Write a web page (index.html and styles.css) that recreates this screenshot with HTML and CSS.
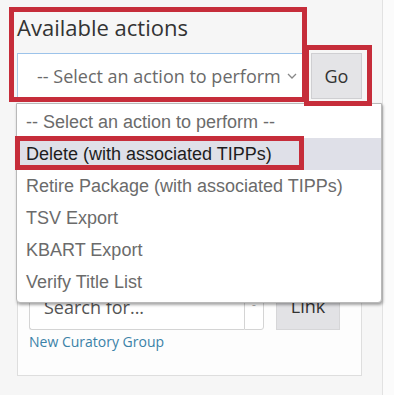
FILE: index.html
```html
<!DOCTYPE html>
<html>
<head>
<meta charset="utf-8">
<link rel="stylesheet" href="styles.css">
</head>
<body>
<div class="page">
  <h3 class="title">Available actions</h3>
  <div class="action-row">
    <div class="select">
      <span class="select-text">-- Select an action to perform --</span>
      <svg class="chevron" width="10" height="7" viewBox="0 0 10 7"><path d="M1 1 L5 5 L9 1" fill="none" stroke="#888" stroke-width="1.3"/></svg>
    </div>
    <button class="btn go">Go</button>
  </div>
  <div class="panel">
    <div class="search-row">
      <div class="search-group">
        <div class="search-input">Search for...</div>
        <div class="search-addon">-</div>
      </div>
      <button class="btn link-btn">Link</button>
    </div>
    <a class="new-link" href="#">New Curatory Group</a>
  </div>

  <ul class="dropdown">
    <li class="opt">-- Select an action to perform --</li>
    <li class="opt active">Delete (with associated TIPPs)</li>
    <li class="opt">Retire Package (with associated TIPPs)</li>
    <li class="opt">TSV Export</li>
    <li class="opt">KBART Export</li>
    <li class="opt">Verify Title List</li>
  </ul>

  <div class="mark mark-title"></div>
  <div class="mark mark-go"></div>
  <div class="mark mark-delete"></div>
</div>
</body>
</html>
```

FILE: styles.css
```css
html, body {
  margin: 0;
  padding: 0;
  background: #fbfbfb;
}
body {
  width: 394px;
  height: 395px;
  overflow: hidden;
  font-family: "Open Sans", sans-serif;
}
.page {
  position: relative;
  width: 383px;
  height: 395px;
  padding: 12px 0 0 17px;
  box-sizing: border-box;
  border-right: 1px solid #e2e2e2;
  background: #f6f6f6;
}
.title {
  margin: 0;
  font-weight: 400;
  font-size: 22px;
  line-height: 30px;
  color: #333;
}
.action-row {
  display: flex;
  gap: 6px;
  margin-top: 11px;
  width: 345px;
}
.select {
  width: 288px;
  height: 46px;
  box-sizing: border-box;
  border: 1px solid #a9c8e6;
  border-top-color: #9cc3ea;
  background: #fff;
  display: flex;
  align-items: center;
  padding: 0 7px 0 19px;
  overflow: hidden;
}
.select-text {
  flex: 1;
  white-space: nowrap;
  overflow: hidden;
  font-size: 18px;
  color: #6a6a6a;
}
.chevron {
  flex: none;
  margin-left: 4px;
}
.btn {
  font-family: "Open Sans", sans-serif;
  font-size: 18px;
  color: #333;
  background: #e4e4e7;
  border: 1px solid #cfcfd2;
  padding: 0;
}
.go {
  width: 51px;
  height: 46px;
}
.panel {
  margin-top: 4px;
  width: 345px;
  height: 273px;
  box-sizing: border-box;
  border: 1px solid #dedede;
  border-top: none;
  background: #fdfdfd;
  padding: 187px 0 0 11px;
}
.search-row {
  display: flex;
  align-items: flex-end;
  gap: 12px;
}
.search-group {
  display: flex;
  height: 38px;
}
.search-input {
  width: 215px;
  box-sizing: border-box;
  border: 1px solid #d4d4d4;
  border-right: none;
  border-radius: 3px 0 0 3px;
  background: #fff;
  padding: 1px 14px 9px;
  font-size: 18px;
  color: #555;
  line-height: 26px;
}
.search-addon {
  width: 20px;
  box-sizing: border-box;
  border: 1px solid #d4d4d4;
  border-radius: 0 3px 3px 0;
  background: #fff;
  font-size: 12px;
  color: #aaa;
  text-align: center;
  line-height: 24px;
}
.link-btn {
  width: 64px;
  height: 40px;
  padding-bottom: 8px;
  background: #e2e2e5;
  border-color: #d6d6d8;
}
.new-link {
  display: block;
  margin-top: 2px;
  font-size: 14px;
  line-height: 19px;
  color: #3b82a8;
  text-decoration: none;
}
.dropdown {
  position: absolute;
  left: 16px;
  top: 103px;
  width: 366px;
  height: 200px;
  margin: 0;
  padding: 2px 0 0;
  box-sizing: border-box;
  list-style: none;
  background: #fff;
  border: 1px solid #b9b9b9;
  border-radius: 0 0 4px 4px;
  box-shadow: 1px 2px 3px rgba(0, 0, 0, 0.35);
  font-family: "Liberation Sans", Arial, sans-serif;
  font-size: 18px;
}
.opt {
  height: 32px;
  line-height: 32px;
  padding-left: 9px;
  color: #6b6b6b;
  white-space: nowrap;
}
.opt.active {
  background: #dfe0e8;
  color: #1d1d1d;
}
.mark {
  position: absolute;
  border: 5px solid #c62d3a;
  box-sizing: border-box;
}
.mark-title {
  left: 9px;
  top: 7px;
  width: 298px;
  height: 95px;
}
.mark-go {
  left: 304px;
  top: 45px;
  width: 68px;
  height: 61px;
}
.mark-delete {
  left: 15px;
  top: 136px;
  width: 289px;
  height: 34px;
}
```
